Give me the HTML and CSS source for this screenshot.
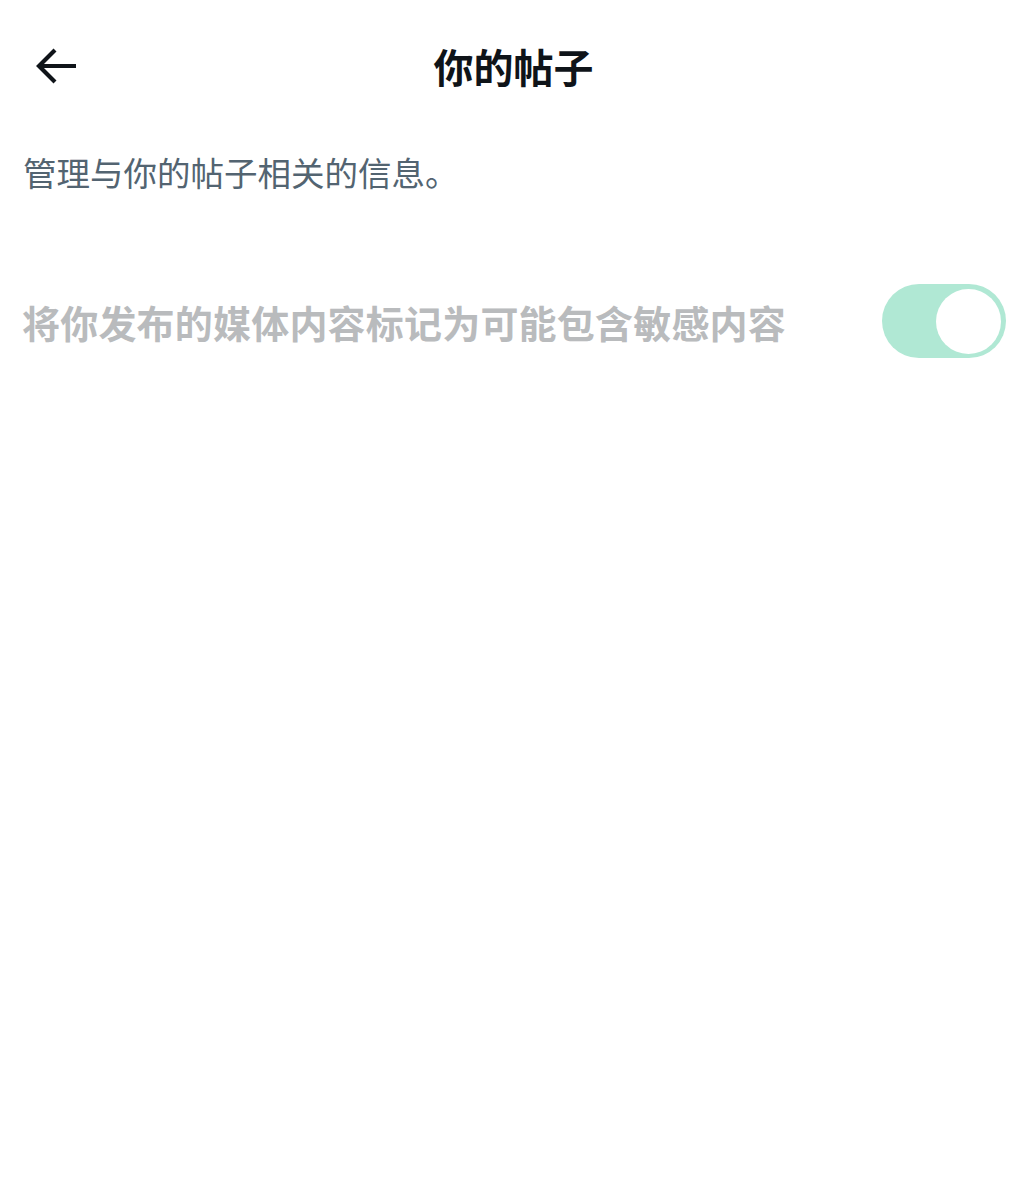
FILE: index.html
```html
<!DOCTYPE html>
<html lang="zh-CN">

<head>
    <meta charset="UTF-8">
    <meta name="viewport" content="width=device-width, initial-scale=1.0">
    <title>你的帖子</title>
    <link rel="stylesheet" href="styles.css">
</head>

<body>
    <div class="header">
        <span class="back">
            <svg width="42" height="36" viewBox="0 0 42 36">
                <path d="M40 18H4M19 2L3 18l16 16" fill="none" stroke="#0f1419" stroke-width="4.2" />
            </svg>
        </span>
        <h1 class="title">你的帖子</h1>
        <span class="back-space"></span>
    </div>
    <p class="desc">管理与你的帖子相关的信息。</p>
    <div class="row">
        <span class="label">将你发布的媒体内容标记为可能包含敏感内容</span>
        <span class="switch"><i class="knob"></i></span>
    </div>
</body>

</html>
```

FILE: styles.css
```css
body {
    margin: 0;
    background: #fff;
    font-family: "Noto Sans CJK SC", "Noto Sans", sans-serif;
}

.header {
    height: 132px;
    display: flex;
    align-items: center;
    justify-content: space-between;
    padding: 0 36px;
}

.back {
    width: 42px;
    height: 36px;
    display: flex;
}

.back-space {
    width: 42px;
}

.title {
    margin: 0;
    font-size: 40px;
    font-weight: bold;
    color: #0f1419;
}

.desc {
    margin: 18px 0 0;
    padding: 0 23px;
    font-size: 33.5px;
    line-height: 44px;
    color: #536471;
}

.row {
    display: flex;
    align-items: center;
    justify-content: space-between;
    padding: 0 21px 0 22px;
    margin-top: 90px;
}

.label {
    font-size: 38px;
    font-weight: bold;
    color: #b9bbbd;
    letter-spacing: 0.2px;
}

.switch {
    width: 124px;
    height: 74px;
    border-radius: 37px;
    background: #b0e8d4;
    display: flex;
    align-items: center;
    justify-content: flex-end;
    padding: 0 5px;
    box-sizing: border-box;
}

.knob {
    width: 65px;
    height: 65px;
    border-radius: 50%;
    background: #fff;
}
```
